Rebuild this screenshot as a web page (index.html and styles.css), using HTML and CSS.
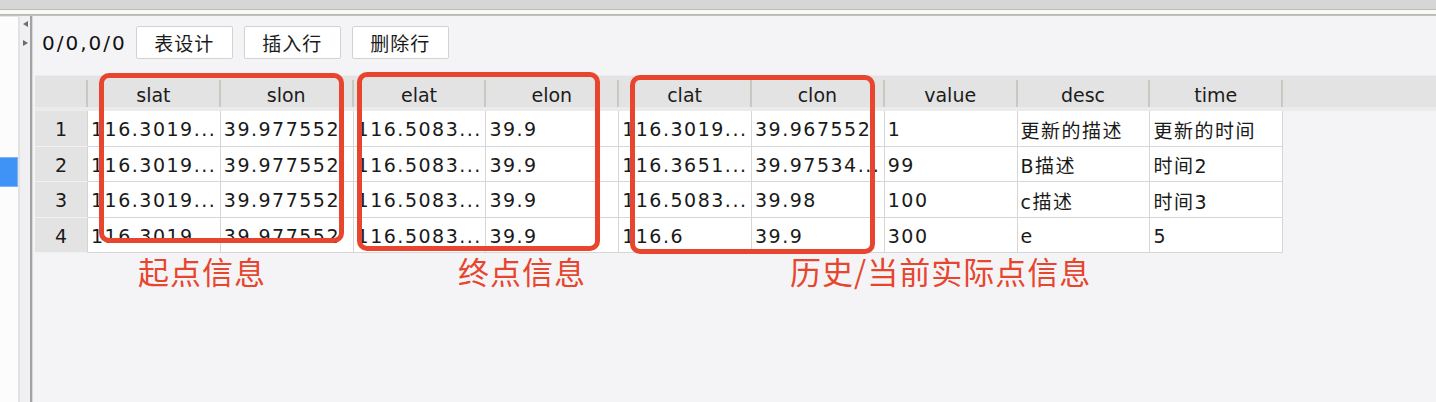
FILE: index.html
```html
<!DOCTYPE html>
<html lang="zh">
<head>
<meta charset="utf-8">
<title>表数据</title>
<link rel="stylesheet" href="styles.css">
</head>
<body>
<div class="topbar"></div>
<div class="main">
  <aside class="sidebar">
    <div class="list"><div class="list-sel"></div></div>
    <div class="gutter">
      <span class="arrow arrow-left"></span>
      <span class="arrow arrow-right"></span>
    </div>
  </aside>
  <div class="splitter"></div>
  <section class="content">
    <div class="toolbar">
      <span class="pos">0/0,0/0</span>
      <button class="btn">表设计</button>
      <button class="btn">插入行</button>
      <button class="btn">删除行</button>
    </div>
    <div class="table">
      <div class="thead">
        <div class="th corner"></div>
        <div class="th">slat</div>
        <div class="th">slon</div>
        <div class="th">elat</div>
        <div class="th">elon</div>
        <div class="th">clat</div>
        <div class="th">clon</div>
        <div class="th">value</div>
        <div class="th">desc</div>
        <div class="th">time</div>
      </div>
      <div class="tbody">
        <div class="row">
          <div class="rh">1</div>
          <div class="td">116.3019...</div><div class="td">39.977552</div>
          <div class="td">116.5083...</div><div class="td">39.9</div>
          <div class="td">116.3019...</div><div class="td">39.967552</div>
          <div class="td">1</div><div class="td">更新的描述</div><div class="td">更新的时间</div>
        </div>
        <div class="row">
          <div class="rh">2</div>
          <div class="td">116.3019...</div><div class="td">39.977552</div>
          <div class="td">116.5083...</div><div class="td">39.9</div>
          <div class="td">116.3651...</div><div class="td">39.97534...</div>
          <div class="td">99</div><div class="td">B描述</div><div class="td">时间2</div>
        </div>
        <div class="row">
          <div class="rh">3</div>
          <div class="td">116.3019...</div><div class="td">39.977552</div>
          <div class="td">116.5083...</div><div class="td">39.9</div>
          <div class="td">116.5083...</div><div class="td">39.98</div>
          <div class="td">100</div><div class="td">c描述</div><div class="td">时间3</div>
        </div>
        <div class="row">
          <div class="rh">4</div>
          <div class="td">116.3019...</div><div class="td">39.977552</div>
          <div class="td">116.5083...</div><div class="td">39.9</div>
          <div class="td">116.6</div><div class="td">39.9</div>
          <div class="td">300</div><div class="td">e</div><div class="td">5</div>
        </div>
      </div>
    </div>
    <div class="mark mark-start"></div>
    <div class="mark mark-end"></div>
    <div class="mark mark-cur"></div>
    <div class="note note-start">起点信息</div>
    <div class="note note-end">终点信息</div>
    <div class="note note-cur">历史/当前实际点信息</div>
  </section>
</div>
</body>
</html>
```
FILE: styles.css
```css
* { box-sizing: border-box; }
html, body {
  margin: 0;
  padding: 0;
  width: 1436px;
  height: 402px;
  overflow: hidden;
  background: #f4f4f6;
  font-family: "DejaVu Sans", "Noto Sans CJK SC", sans-serif;
  color: #1a1a1a;
}

.topbar {
  height: 16px;
  background: linear-gradient(to bottom,
    #d6d6d6 0, #d6d6d6 9px,
    #bdbdbd 9px, #bdbdbd 10px,
    #f8f8f8 10px, #f8f8f8 14px,
    #b3b1aa 14px, #c9c7c0 16px);
}

.main {
  display: flex;
  height: 386px;
}

.sidebar {
  display: flex;
  width: 30px;
  flex: none;
}
.list {
  width: 20px;
  background: #fcfcfc;
  border-right: 2px solid #e2e2e2;
  border-top: 1px solid #e6e6e6;
  padding-top: 140px;
}
.list-sel {
  width: 18px;
  height: 30px;
  background: #3f93f7;
  border: 1px solid #7fb1f2;
  border-left: none;
}
.gutter {
  width: 10px;
  background: #f0f0f2;
  display: flex;
  flex-direction: column;
  align-items: center;
  padding-top: 5px;
  gap: 13px;
}
.arrow {
  width: 0;
  height: 0;
  border-top: 3.5px solid transparent;
  border-bottom: 3.5px solid transparent;
}
.arrow-left { border-right: 5px solid #6d6d6d; }
.arrow-right { border-left: 5px solid #6d6d6d; }

.splitter {
  width: 3px;
  flex: none;
  background: linear-gradient(to right, #a2a2a2 0, #a2a2a2 2px, #d9d9d9 2px);
}

.content {
  position: relative;
  flex: 1;
  min-width: 0;
}

.toolbar {
  display: flex;
  align-items: center;
  height: 59px;
  padding: 10px 0 16px 9px;
}
.pos {
  font-size: 20px;
  letter-spacing: 2px;
  margin-right: 9px;
  color: #111;
}
.btn {
  width: 97px;
  height: 33px;
  margin-right: 11px;
  background: #ffffff;
  border: 1px solid #d2d2d2;
  border-radius: 2px;
  font-family: "DejaVu Sans", "Noto Sans CJK SC", sans-serif;
  font-size: 19px;
  letter-spacing: 1px;
  color: #1a1a1a;
  padding: 0;
}

.table {
  margin-left: 2px;
}
.thead {
  display: grid;
  grid-template-columns: 53px repeat(9, 132.8px);
  height: 36px;
  background: linear-gradient(to bottom, #ededed 0, #ededed 1px, #e3e3e3 1px, #e3e3e3 32px, #ebebeb 32px);
  align-items: start;
}
.th {
  height: 36px;
  display: flex;
  align-items: center;
  justify-content: center;
  font-size: 19px;
  color: #1c1c1c;
  padding-top: 4px;
  border-right: 2px solid transparent;
  border-image: linear-gradient(to bottom, transparent 6px, #c9c8c1 6px, #c9c8c1 31px, transparent 31px) 1;
}
.tbody {
  display: flex;
  flex-direction: column;
  width: 1248px;
}
.row {
  display: grid;
  grid-template-columns: 53px repeat(9, 132.8px);
  height: 35.5px;
}
.rh {
  background: #e3e3e3;
  border-bottom: 1px solid #f1f1f1;
  border-right: 1px solid #d4d4d4;
  display: flex;
  align-items: center;
  justify-content: center;
  font-size: 19px;
  padding-top: 2px;
}
.td {
  background: #ffffff;
  border-right: 1px solid #d6d6d6;
  border-bottom: 1px solid #d6d6d6;
  display: flex;
  align-items: center;
  padding-left: 3px;
  padding-top: 2px;
  font-size: 19px;
  letter-spacing: 1.5px;
  white-space: nowrap;
  overflow: hidden;
}

.mark {
  position: absolute;
  border: 5px solid #e8452f;
  border-radius: 10px;
}
.mark-start { left: 66px; top: 57px; width: 245px; height: 170px; }
.mark-end { left: 324px; top: 56px; width: 243px; height: 179px; }
.mark-cur { left: 597px; top: 59px; width: 245px; height: 179px; }

.note {
  position: absolute;
  font-family: "Noto Sans CJK SC", sans-serif;
  font-size: 31px;
  line-height: 34px;
  letter-spacing: 1px;
  color: #e8452f;
  white-space: nowrap;
}
.note-start { left: 105px; top: 238px; }
.note-end { left: 425px; top: 238px; }
.note-cur { left: 757px; top: 238px; }
```
